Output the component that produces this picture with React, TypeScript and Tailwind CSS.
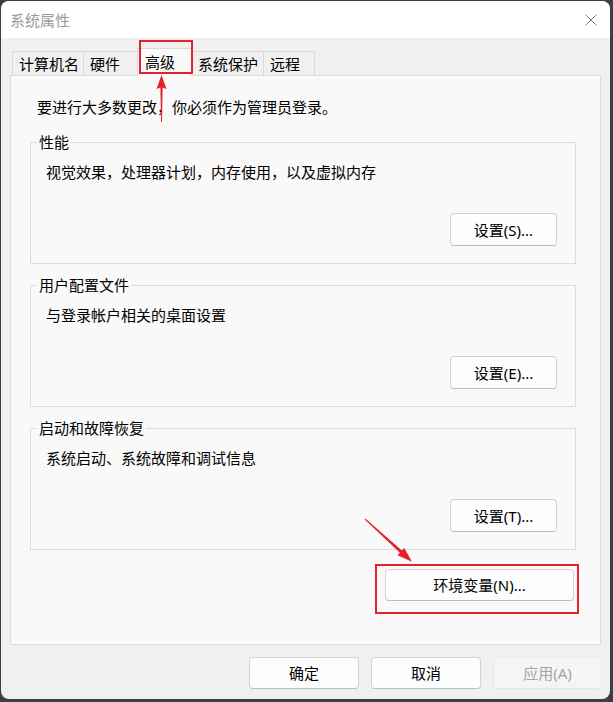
import type React from 'react';

const groups = [
  { title: '性能', desc: '视觉效果，处理器计划，内存使用，以及虚拟内存', button: '设置(S)...' },
  { title: '用户配置文件', desc: '与登录帐户相关的桌面设置', button: '设置(E)...' },
  { title: '启动和故障恢复', desc: '系统启动、系统故障和调试信息', button: '设置(T)...' },
];

const tabs = [
  { label: '计算机名', width: 'w-[71px]' },
  { label: '硬件', width: 'w-[54px]' },
  { label: '高级', width: 'w-[55px]', active: true },
  { label: '系统保护', width: 'w-[71px]' },
  { label: '远程', width: 'w-[52px]' },
];

const Button: React.FC<{ label: string; className?: string; disabled?: boolean }> = ({
  label,
  className = '',
  disabled,
}) => (
  <button
    className={`h-[32px] rounded-[4px] border text-[15px] leading-[20px] flex items-center justify-center ${
      disabled
        ? 'bg-[#f5f5f5] border-[#e8e8e8] text-[#a3a3a3]'
        : 'bg-[#fdfdfd] border-[#d3d3d3] border-b-[#bdbdbd] text-black'
    } ${className}`}
  >
    {label}
  </button>
);

const App: React.FC = () => {
  return (
    <div className="relative w-[613px] h-[702px] bg-[#3d3d45] pt-[1px] pl-[1px] font-['Noto_Sans','Noto_Sans_CJK_SC',sans-serif]">
      <div className="w-[609px] h-[698px] rounded-[8px] overflow-hidden bg-[#f0f0f0] flex flex-col">
        {/* title bar */}
        <div className="h-[37px] bg-white flex items-center justify-between pl-[9px] pr-[13px]">
          <span className="text-[15px] leading-[20px] text-[#9b9b9b]">系统属性</span>
          <svg width="12" height="12" viewBox="0 0 12 12" className="text-[#7c7c7c]">
            <path d="M0.5 0.5 L11.5 11.5 M11.5 0.5 L0.5 11.5" stroke="currentColor" strokeWidth="1" fill="none" />
          </svg>
        </div>

        <div className="flex-1 px-[9px] pt-[10px] flex flex-col">
          {/* tabs */}
          <div className="flex items-end ml-[2px] -mb-px relative z-10">
            {tabs.map((tab, i) => (
              <div
                key={tab.label}
                className={`${tab.width} flex items-center text-[15px] leading-[20px] text-black border-t border-[#d9d9d9] ${
                  tab.active
                    ? 'h-[28px] pb-[2px] pl-[7px] bg-[#f9f9f9] border-l border-r'
                    : `h-[25px] pl-[6px] bg-[#f0f0f0] border-b border-b-[#dcdcdc] ${
                        tabs[i - 1]?.active ? '' : 'border-l'
                      } ${i === tabs.length - 1 ? 'border-r' : ''}`
                }`}
              >
                {tab.label}
              </div>
            ))}
          </div>

          {/* tab page */}
          <div className="h-[570px] bg-[#f9f9f9] border border-[#dcdcdc] pt-[21px] pl-[19px] pr-[24px] flex flex-col">
            <p className="ml-[7px] text-[15px] leading-[20px] text-black">
              要进行大多数更改，你必须作为管理员登录。
            </p>

            <div className="mt-[15px] flex flex-col gap-[11px]">
              {groups.map((g) => (
                <fieldset
                  key={g.title}
                  className="border border-[#dcdcdc] pl-[6px] pr-[18px] pt-[10px] pb-[17px] flex flex-col"
                >
                  <legend className="px-[2px] text-[15px] leading-[20px] text-black">{g.title}</legend>
                  <p className="pl-[9px] text-[15px] leading-[20px] text-black">{g.desc}</p>
                  <div className="mt-[31px] flex justify-end">
                    <Button label={g.button} className="w-[107px] h-[33px]" />
                  </div>
                </fieldset>
              ))}
            </div>

            <div className="mt-[14px] flex justify-end mr-[-3px]">
              <div className="border-2 border-[#e8202a] pt-[3px] pl-[8px] pr-[3px] pb-[11px]">
                <Button label="环境变量(N)..." className="w-[189px]" />
              </div>
            </div>
          </div>

          {/* dialog buttons */}
          <div className="mt-[12px] flex justify-end gap-[12px] mr-[-1px]">
            <Button label="确定" className="w-[110px]" />
            <Button label="取消" className="w-[110px]" />
            <Button label="应用(A)" className="w-[109px]" disabled />
          </div>
        </div>
      </div>

      {/* annotations */}
      <div className="absolute z-20 left-[139px] top-[40px] w-[54px] h-[34px] border-2 border-[#e8202a]" />
      <svg className="absolute z-20 left-0 top-0 pointer-events-none" width="613" height="702" viewBox="0 0 613 702">
        <polygon
          fill="#e8202a"
          points="161.5,75 166.5,89 162.6,87.5 162,122 161,122 160.4,87.5 156.5,89"
        />
        <polygon
          fill="#e8202a"
          points="412,561.7 397.5,555.3 399.9,552.7 364.7,519.4 365.3,518.6 401.9,550.5 404.3,547.9"
        />
      </svg>
    </div>
  );
};

export default App;
